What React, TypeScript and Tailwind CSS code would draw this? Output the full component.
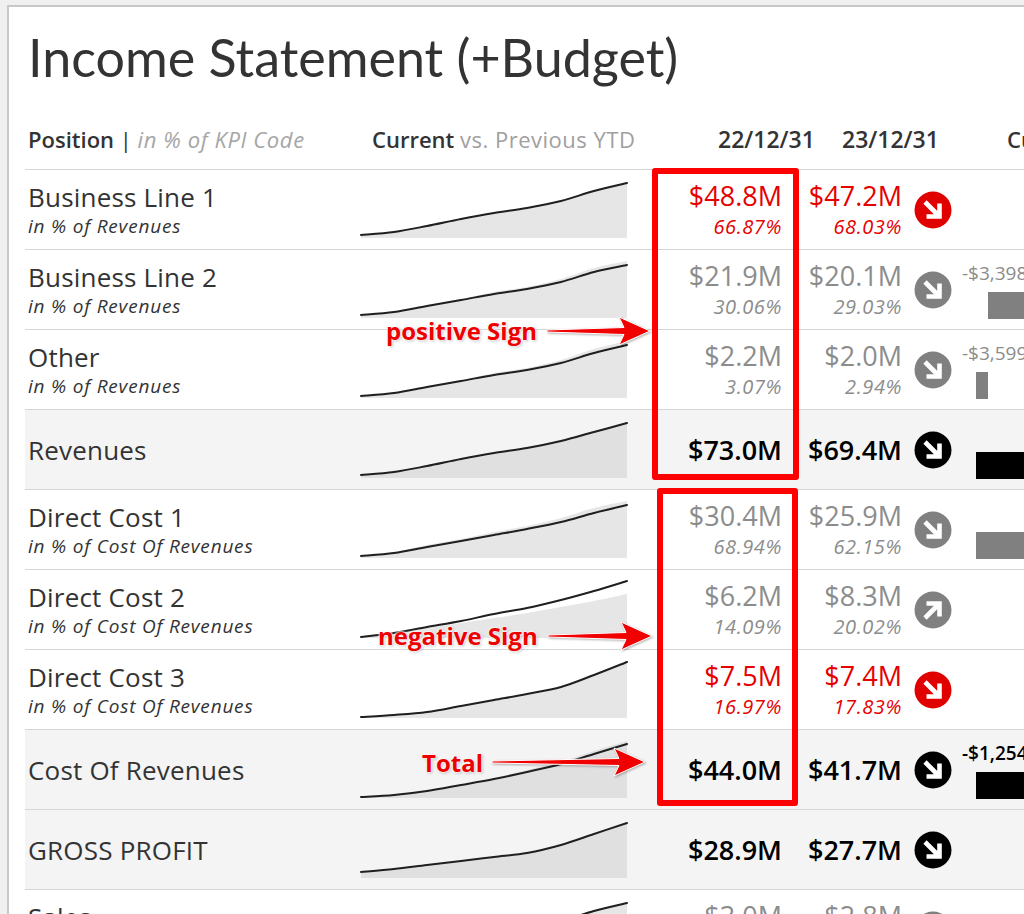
import React from "react";

type Tone = "red" | "gray" | "black";

interface RowData {
  label: string;
  sub?: string;
  total?: boolean;
  tone: Tone;
  v1: string;
  p1?: string;
  v2: string;
  p2?: string;
  dir: "down" | "up";
  note?: string;
  noteClass?: string;
  bar?: string;
  line: number[];
  area: number[];
}

const XS = [0, 33, 66, 100, 133, 166, 200, 233, 266];

const rows: RowData[] = [
  {
    label: "Business Line 1",
    sub: "in % of Revenues",
    tone: "red",
    v1: "$48.8M",
    p1: "66.87%",
    v2: "$47.2M",
    p2: "68.03%",
    dir: "down",
    line: [54, 51, 45, 38, 32, 27, 20, 10, 2],
    area: [54, 51, 45, 38, 32, 27, 19, 9, 1],
  },
  {
    label: "Business Line 2",
    sub: "in % of Revenues",
    tone: "gray",
    v1: "$21.9M",
    p1: "30.06%",
    v2: "$20.1M",
    p2: "29.03%",
    dir: "down",
    note: "-$3,398K",
    noteClass: "text-[#8c8c8c]",
    bar: "ml-[26px] w-[80px] bg-[#808080]",
    line: [54, 51, 45, 39, 33, 28, 21, 11, 4],
    area: [54, 51, 44, 38, 31, 26, 18, 7, 0],
  },
  {
    label: "Other",
    sub: "in % of Revenues",
    tone: "gray",
    v1: "$2.2M",
    p1: "3.07%",
    v2: "$2.0M",
    p2: "2.94%",
    dir: "down",
    note: "-$3,599K",
    noteClass: "text-[#8c8c8c]",
    bar: "ml-[14px] w-[12px] bg-[#808080]",
    line: [55, 52, 46, 40, 34, 29, 22, 12, 4],
    area: [55, 52, 45, 39, 32, 27, 19, 8, 0],
  },
  {
    label: "Revenues",
    total: true,
    tone: "black",
    v1: "$73.0M",
    v2: "$69.4M",
    dir: "down",
    bar: "ml-[14px] w-[80px] bg-black",
    line: [54, 51, 45, 38, 32, 27, 20, 11, 2],
    area: [54, 51, 45, 38, 32, 26, 19, 10, 1],
  },
  {
    label: "Direct Cost 1",
    sub: "in % of Cost Of Revenues",
    tone: "gray",
    v1: "$30.4M",
    p1: "68.94%",
    v2: "$25.9M",
    p2: "62.15%",
    dir: "down",
    bar: "ml-[14px] w-[80px] bg-[#808080]",
    line: [55, 52, 46, 40, 34, 28, 21, 12, 4],
    area: [55, 51, 44, 38, 31, 25, 17, 7, 0],
  },
  {
    label: "Direct Cost 2",
    sub: "in % of Cost Of Revenues",
    tone: "gray",
    v1: "$6.2M",
    p1: "14.09%",
    v2: "$8.3M",
    p2: "20.02%",
    dir: "up",
    line: [56, 52, 46, 40, 33, 27, 19, 10, 0],
    area: [56, 52, 47, 42, 37, 32, 26, 20, 13],
  },
  {
    label: "Direct Cost 3",
    sub: "in % of Cost Of Revenues",
    tone: "red",
    v1: "$7.5M",
    p1: "16.97%",
    v2: "$7.4M",
    p2: "17.83%",
    dir: "down",
    line: [56, 54, 51, 45, 39, 33, 26, 14, 1],
    area: [56, 54, 51, 45, 39, 33, 26, 14, 1],
  },
  {
    label: "Cost Of Revenues",
    total: true,
    tone: "black",
    v1: "$44.0M",
    v2: "$41.7M",
    dir: "down",
    note: "-$1,254K",
    noteClass: "font-semibold text-black",
    bar: "ml-[14px] w-[80px] bg-black",
    line: [56, 54, 50, 44, 38, 31, 23, 13, 3],
    area: [56, 54, 50, 44, 37, 29, 21, 10, 0],
  },
  {
    label: "GROSS PROFIT",
    total: true,
    tone: "black",
    v1: "$28.9M",
    v2: "$27.7M",
    dir: "down",
    line: [51, 48, 44, 40, 36, 32, 24, 13, 2],
    area: [51, 48, 44, 40, 36, 32, 24, 13, 3],
  },
  {
    label: "Sales",
    sub: "in % of Revenues",
    tone: "gray",
    v1: "$3.0M",
    p1: "4.11%",
    v2: "$2.8M",
    p2: "4.03%",
    dir: "down",
    line: [54, 51, 45, 38, 32, 27, 20, 10, 2],
    area: [54, 51, 45, 38, 32, 27, 19, 9, 1],
  },
];

const toneText: Record<Tone, string> = {
  red: "text-[#e60000]",
  gray: "text-[#8c8c8c]",
  black: "text-black font-semibold",
};

const toneFill: Record<Tone, string> = {
  red: "#e00000",
  gray: "#808080",
  black: "#000000",
};

// catmull-rom to bezier so the sparkline reads as a smooth curve
const smooth = (ys: number[]) => {
  const p = ys.map((y, i) => [XS[i], y]);
  let d = `M${p[0][0]},${p[0][1]}`;
  for (let i = 0; i < p.length - 1; i++) {
    const p0 = p[i - 1] ?? p[i];
    const p1 = p[i];
    const p2 = p[i + 1];
    const p3 = p[i + 2] ?? p2;
    const c1x = p1[0] + (p2[0] - p0[0]) / 6;
    const c1y = p1[1] + (p2[1] - p0[1]) / 6;
    const c2x = p2[0] - (p3[0] - p1[0]) / 6;
    const c2y = p2[1] - (p3[1] - p1[1]) / 6;
    d += ` C${c1x},${c1y} ${c2x},${c2y} ${p2[0]},${p2[1]}`;
  }
  return d;
};

const Sparkline = ({ line, area, total }: { line: number[]; area: number[]; total?: boolean }) => (
  <svg viewBox="0 0 266 58" className="h-[58px] w-[266px] shrink-0 overflow-visible">
    <path d={`${smooth(area)} L266,57 L0,57 Z`} fill={total ? "#e0e0e0" : "#e6e6e6"} />
    <path d={smooth(line)} fill="none" stroke="#1f1f1f" strokeWidth="2" strokeLinecap="round" />
  </svg>
);

const TrendIcon = ({ tone, dir }: { tone: Tone; dir: "down" | "up" }) => (
  <svg viewBox="0 0 38 38" className="h-[38px] w-[38px] shrink-0">
    <circle cx="19" cy="19" r="18.5" fill={toneFill[tone]} />
    {dir === "down" ? (
      <path d="M11 11 L24 24 M12.5 25.5 H25.5 V12.5" stroke="#fff" strokeWidth="4.6" fill="none" strokeLinejoin="miter" />
    ) : (
      <path d="M11 27 L24 14 M12.5 12.5 H25.5 V25.5" stroke="#fff" strokeWidth="4.6" fill="none" strokeLinejoin="miter" />
    )}
  </svg>
);

const Pointer = ({ width }: { width: number }) => {
  const w = width;
  const pts = `0,14 ${w - 26},11.5 ${w - 31},1 ${w},15 ${w - 31},29 ${w - 26},18.5 0,16`;
  return (
    <svg width={w} height={30} viewBox={`0 0 ${w} 30`} className="overflow-visible drop-shadow-[1px_1px_1px_rgba(0,0,0,0.3)]">
      <polygon points={pts} fill="#f00000" stroke="#ffffff" strokeWidth="1" strokeLinejoin="round" />
    </svg>
  );
};

const halo =
  "[text-shadow:0_0_2px_#fff,0_0_2px_#fff,0_0_3px_#fff,1px_1px_3px_rgba(0,0,0,0.35)]";

const Row = ({ r }: { r: RowData }) => (
  <div
    className={`flex h-[80px] shrink-0 items-center border-b border-[#d6d6d6] pl-[3px] ${
      r.total ? "bg-[#f4f4f4]" : "bg-white"
    }`}
  >
    <div className="flex w-[333px] flex-col justify-center text-[#333333]">
      <div className="text-[26px] leading-[30px] tracking-[0.2px]">{r.label}</div>
      {r.sub && (
        <div className="mt-[3px] text-[19px] italic leading-[22px] tracking-[0.8px] text-[#333333]">{r.sub}</div>
      )}
    </div>
    <Sparkline line={r.line} area={r.area} total={r.total} />
    <div className={`flex w-[155px] flex-col items-end ${toneText[r.tone]}`}>
      <div className="text-[27px] leading-[30px]">{r.v1}</div>
      {r.p1 && <div className="mt-[5px] text-[20px] italic leading-[22px] tracking-[0.6px] font-normal">{r.p1}</div>}
    </div>
    <div className={`flex w-[120px] flex-col items-end ${toneText[r.tone]}`}>
      <div className="text-[27px] leading-[30px]">{r.v2}</div>
      {r.p2 && <div className="mt-[5px] text-[20px] italic leading-[22px] tracking-[0.6px] font-normal">{r.p2}</div>}
    </div>
    <div className="ml-[12px]">
      <TrendIcon tone={r.tone} dir={r.dir} />
    </div>
    <div className="ml-[10px] flex h-full w-[120px] flex-col pt-[12px]">
      <div className={`h-[22px] whitespace-nowrap text-[19px] leading-[22px] ${r.noteClass ?? ""}`}>{r.note ?? ""}</div>
      {r.bar && <div className={`mt-[8px] h-[27px] ${r.bar}`} />}
    </div>
  </div>
);

export default function App() {
  return (
    <div className="h-[914px] w-full overflow-hidden bg-[#f0f0f0] pl-[7px] pt-[5px] font-['Open_Sans',sans-serif]">
      <div className="relative flex h-[940px] w-[1120px] flex-col border-l-2 border-t-2 border-[#c8c8c8] bg-white pl-[16px]">
        <div className="h-[113px] shrink-0 pl-[3px] pt-[24px] font-['Lato','Open_Sans',sans-serif] text-[52px] leading-[52px] text-[#333333]">
          Income Statement (+Budget)
        </div>

        <div className="flex h-[50px] shrink-0 border-b border-[#d6d6d6] pl-[3px] pt-[5px] text-[22px] leading-[28px] text-[#333333]">
          <div className="w-[344px] whitespace-nowrap">
            <span className="font-semibold">Position</span> <span>|</span>{" "}
            <span className="italic tracking-[0.6px] text-[#a6a6a6]">in % of KPI Code</span>
          </div>
          <div className="w-[346px] whitespace-nowrap">
            <span className="font-semibold">Current</span>{" "}
            <span className="tracking-[0.5px] text-[#a0a0a0]">vs. Previous YTD</span>
          </div>
          <div className="w-[124px] text-[23px] font-semibold">22/12/31</div>
          <div className="w-[165px] text-[23px] font-semibold">23/12/31</div>
          <div className="whitespace-nowrap font-semibold">Current</div>
        </div>

        {rows.map((r) => (
          <Row key={r.label} r={r} />
        ))}

        {/* annotation boxes */}
        <div className="absolute left-[643px] top-[161px] h-[312px] w-[147px] rounded-[3px] border-[6px] border-[#ff0000]" />
        <div className="absolute left-[648px] top-[481px] h-[318px] w-[141px] rounded-[3px] border-[6px] border-[#ff0000]" />

        {/* annotation labels */}
        <div className={`absolute left-[377px] top-[309px] text-[24px] font-bold leading-[30px] text-[#ee0000] ${halo}`}>
          positive Sign
        </div>
        <div className="absolute left-[538px] top-[309px]">
          <Pointer width={103} />
        </div>

        <div className={`absolute left-[369px] top-[614px] text-[24px] font-bold leading-[30px] text-[#ee0000] ${halo}`}>
          negative Sign
        </div>
        <div className="absolute left-[539px] top-[614px]">
          <Pointer width={104} />
        </div>

        <div className={`absolute left-[413px] top-[741px] text-[24px] font-bold leading-[30px] text-[#ee0000] ${halo}`}>
          Total
        </div>
        <div className="absolute left-[483px] top-[740px]">
          <Pointer width={153} />
        </div>
      </div>
    </div>
  );
}
